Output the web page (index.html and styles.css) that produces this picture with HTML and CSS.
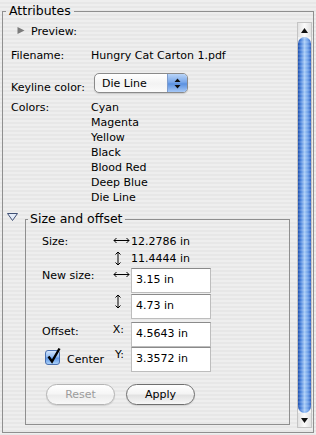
FILE: index.html
```html
<!DOCTYPE html>
<html lang="en">
<head>
  <meta charset="UTF-8" />
  <meta name="viewport" content="width=device-width, initial-scale=1" />
  <title>Attributes</title>
  <link rel="stylesheet" href="styles.css">
</head>
<body>
  <fieldset class="group outer">
    <legend>Attributes</legend>
    <div class="pane">
      <div class="content">

        <!-- ── Preview (collapsed) ─────────────────────────── -->
        <div class="disclosure">
          <svg class="tri-closed" width="8" height="7" viewBox="0 0 8 7"><path d="M0.5 0L7.5 3.5L0.5 7Z"/></svg>
          <span>Preview:</span>
        </div>

        <div class="row filename">
          <span class="label">Filename:</span>
          <span>Hungry Cat Carton 1.pdf</span>
        </div>

        <div class="row keyline">
          <span class="label">Keyline color:</span>
          <div class="popup">
            <span class="popup-text">Die Line</span>
            <span class="popup-arrows">
              <svg width="7" height="11" viewBox="0 0 7 11"><path d="M0.5 4L3.5 0.5L6.5 4Z M0.5 7L3.5 10.5L6.5 7Z"/></svg>
            </span>
          </div>
        </div>

        <div class="row colors">
          <span class="label">Colors:</span>
          <ul class="color-list">
            <li>Cyan</li>
            <li>Magenta</li>
            <li>Yellow</li>
            <li>Black</li>
            <li>Blood Red</li>
            <li>Deep Blue</li>
            <li>Die Line</li>
          </ul>
        </div>

        <!-- ── Size and offset (expanded) ──────────────────── -->
        <div class="section">
          <svg class="tri-open" width="11" height="8" viewBox="0 0 11 8"><path d="M0.5 0.5H10.5L5.5 7.5Z"/></svg>
          <fieldset class="group inner">
            <legend>Size and offset</legend>
            <div class="group-body">
              <div class="size-grid">
                <span class="label">Size:</span>
                <span class="axis"><svg class="harrow" width="17" height="7" viewBox="0 0 17 7"><path d="M1 3.5H16M3.5 1L1 3.5L3.5 6M13.5 1L16 3.5L13.5 6"/></svg></span>
                <span class="value">12.2786 in</span>

                <span></span>
                <span class="axis"><svg class="varrow" width="16" height="15" viewBox="0 0 16 15"><path d="M8 1V14M5.5 3.5L8 1L10.5 3.5M5.5 11.5L8 14L10.5 11.5"/></svg></span>
                <span class="value">11.4444 in</span>

                <span class="label">New size:</span>
                <span class="axis"><svg class="harrow" width="17" height="7" viewBox="0 0 17 7"><path d="M1 3.5H16M3.5 1L1 3.5L3.5 6M13.5 1L16 3.5L13.5 6"/></svg></span>
                <input class="field" type="text" value="3.15 in" />

                <span></span>
                <span class="axis"><svg class="varrow" width="16" height="15" viewBox="0 0 16 15"><path d="M8 1V14M5.5 3.5L8 1L10.5 3.5M5.5 11.5L8 14L10.5 11.5"/></svg></span>
                <input class="field" type="text" value="4.73 in" />

                <span class="label offset">Offset:</span>
                <span class="coord">X:</span>
                <input class="field" type="text" value="4.5643 in" />

                <label class="check">
                  <span class="checkbox">
                    <svg width="16" height="18" viewBox="0 0 16 18"><path d="M3.5 9.5L7 14.5L14.5 1.5"/></svg>
                  </span>
                  <span class="check-text">Center</span>
                </label>
                <span class="coord">Y:</span>
                <input class="field" type="text" value="3.3572 in" />
              </div>

              <div class="buttons">
                <button class="btn" disabled>Reset</button>
                <button class="btn default">Apply</button>
              </div>
            </div>
          </fieldset>
        </div>
      </div>

      <!-- ── Scrollbar ─────────────────────────────────────── -->
      <div class="scrollbar">
        <div class="scroll-btn up"><svg width="7" height="5" viewBox="0 0 7 5"><path d="M0 5L3.5 0L7 5Z"/></svg></div>
        <div class="thumb"></div>
        <div class="scroll-btn down"><svg width="7" height="5" viewBox="0 0 7 5"><path d="M0 0L3.5 5L7 0Z"/></svg></div>
      </div>
    </div>
  </fieldset>
</body>
</html>
```

FILE: styles.css
```css
body {
  margin: 0;
  width: 316px;
  height: 435px;
  overflow: hidden;
  font-family: "DejaVu Sans", Verdana, sans-serif;
  font-size: 11px;
  line-height: 15px;
  color: #000;
  background: repeating-linear-gradient(to bottom, #eeeeee 0 2px, #e7e7e7 2px 4px);
}

/* group boxes */
.group {
  border: 1px solid #8f8f8f;
  padding: 0;
  min-width: 0;
}
.group > legend {
  font-size: 12.5px;
  line-height: 16px;
  padding: 0 3px;
}
.outer {
  margin: 3px 2px 0;
}
.outer > legend {
  margin-left: 3px;
}
.inner {
  flex: 1;
  margin: 0;
}
.inner > legend {
  margin-left: 2px;
  padding: 0 2px;
}
.group-body {
  padding: 7px 0 19px 16px;
}

.pane {
  display: flex;
  height: 413px;
}
.content {
  flex: 1;
  min-width: 0;
  padding-top: 5px;
  overflow: hidden;
}

/* disclosure rows */
.disclosure {
  display: flex;
  align-items: flex-start;
  gap: 6px;
  margin-left: 14px;
}
.tri-closed {
  margin-top: 3px;
  fill: #7b7b7b;
}
.tri-open {
  flex: none;
  margin: 2px 7px 0 0;
  fill: #e3ebf8;
  stroke: #3f4f74;
  stroke-width: 1;
}

.row {
  display: flex;
  align-items: flex-start;
  margin-left: 8px;
}
.label {
  width: 80px;
  flex: none;
}
.filename {
  margin-top: 9px;
}
.keyline {
  margin-top: 10px;
}
.keyline .label {
  width: 83px;
  padding-top: 7px;
}
.colors {
  margin-top: 5px;
}
.color-list {
  list-style: none;
  margin: 0;
  padding: 0;
}

/* pop-up button */
.popup {
  display: flex;
  width: 94px;
  height: 20px;
  box-sizing: border-box;
  border: 1px solid #8a8a8a;
  border-radius: 5px;
  overflow: hidden;
  background: linear-gradient(#ffffff, #f3f3f3 55%, #fbfbfb);
  box-shadow: 0 1px 1px rgba(0, 0, 0, 0.15);
}
.popup-text {
  flex: 1;
  padding: 2px 0 0 7px;
}
.popup-arrows {
  width: 19px;
  display: flex;
  align-items: center;
  justify-content: center;
  border-left: 1px solid #7e9ccc;
  background: linear-gradient(#b9d4f7, #7aa8ea 45%, #5b91e0 55%, #a6c8f6);
}
.popup-arrows svg {
  fill: #111;
}

.section {
  display: flex;
  align-items: flex-start;
  margin: 6px 7px 0 4px;
}

/* size grid */
.size-grid {
  display: grid;
  grid-template-columns: 66px 23px 80px;
  grid-template-rows: 17px 17px 26px 28px 25px 25px;
  align-items: start;
}
.axis {
  padding-left: 5px;
}
.harrow {
  display: block;
  margin-top: 3px;
  fill: none;
  stroke: #000;
  stroke-width: 1;
}
.varrow {
  display: block;
  margin-left: -3px;
  fill: none;
  stroke: #000;
  stroke-width: 1;
}
.size-grid .label.offset {
  padding-top: 2px;
}
.coord {
  text-align: right;
  padding-right: 7px;
}
.field {
  width: 80px;
  height: 25px;
  box-sizing: border-box;
  margin: 0;
  padding: 0 4px 2px;
  border: 1px solid #bdbdbd;
  border-top-color: #8a8a8a;
  border-radius: 0;
  background: #fff;
  font: inherit;
  color: #000;
  outline: none;
}

.check {
  display: flex;
  align-items: flex-start;
  gap: 7px;
  padding: 3px 0 0 3px;
}
.checkbox {
  position: relative;
  width: 15px;
  height: 15px;
  box-sizing: border-box;
  border: 1px solid #4a6fae;
  border-radius: 3px;
  background: linear-gradient(#d4e6fc, #8fbaf2 45%, #5f97e6 55%, #a9d0fa);
}
.checkbox svg {
  position: absolute;
  left: -1px;
  top: -4px;
  fill: none;
  stroke: #000;
  stroke-width: 2.4;
}
.check-text {
  padding-top: 2px;
}

/* buttons */
.buttons {
  display: flex;
  gap: 11px;
  margin: 12px 0 0 4px;
}
.btn {
  width: 69px;
  height: 21px;
  padding: 0;
  border: 1px solid #6f6f6f;
  border-radius: 11px;
  font: inherit;
  color: #000;
  background: linear-gradient(#ffffff, #f4f4f4 45%, #e2e2e2 55%, #f7f7f7);
  box-shadow: 0 1px 1px rgba(0, 0, 0, 0.12);
}
.btn:disabled {
  color: #9c9c9c;
  border-color: #b4b4b4;
  background: linear-gradient(#ffffff, #f6f6f6 45%, #ececec 55%, #f8f8f8);
}

/* scrollbar */
.scrollbar {
  width: 15px;
  flex: none;
  box-sizing: border-box;
  margin: 3px 1px 4px 0;
  display: flex;
  flex-direction: column;
  border: 1px solid #c4c4c4;
  background: #f3f3f3;
}
.scroll-btn {
  height: 14px;
  display: flex;
  align-items: center;
  justify-content: center;
  background: linear-gradient(to right, #e2e2e2, #fbfbfb 50%, #e2e2e2);
}
.scroll-btn svg {
  fill: #111;
}
.thumb {
  flex: 1;
  border-radius: 7px;
  background:
    repeating-linear-gradient(to bottom, rgba(255, 255, 255, 0.12) 0 2px, transparent 2px 4px),
    linear-gradient(to right, #1f4fad, #4f86dc 22%, #a7cbf7 50%, #6d9fe8 78%, #2f62c2);
}
```
